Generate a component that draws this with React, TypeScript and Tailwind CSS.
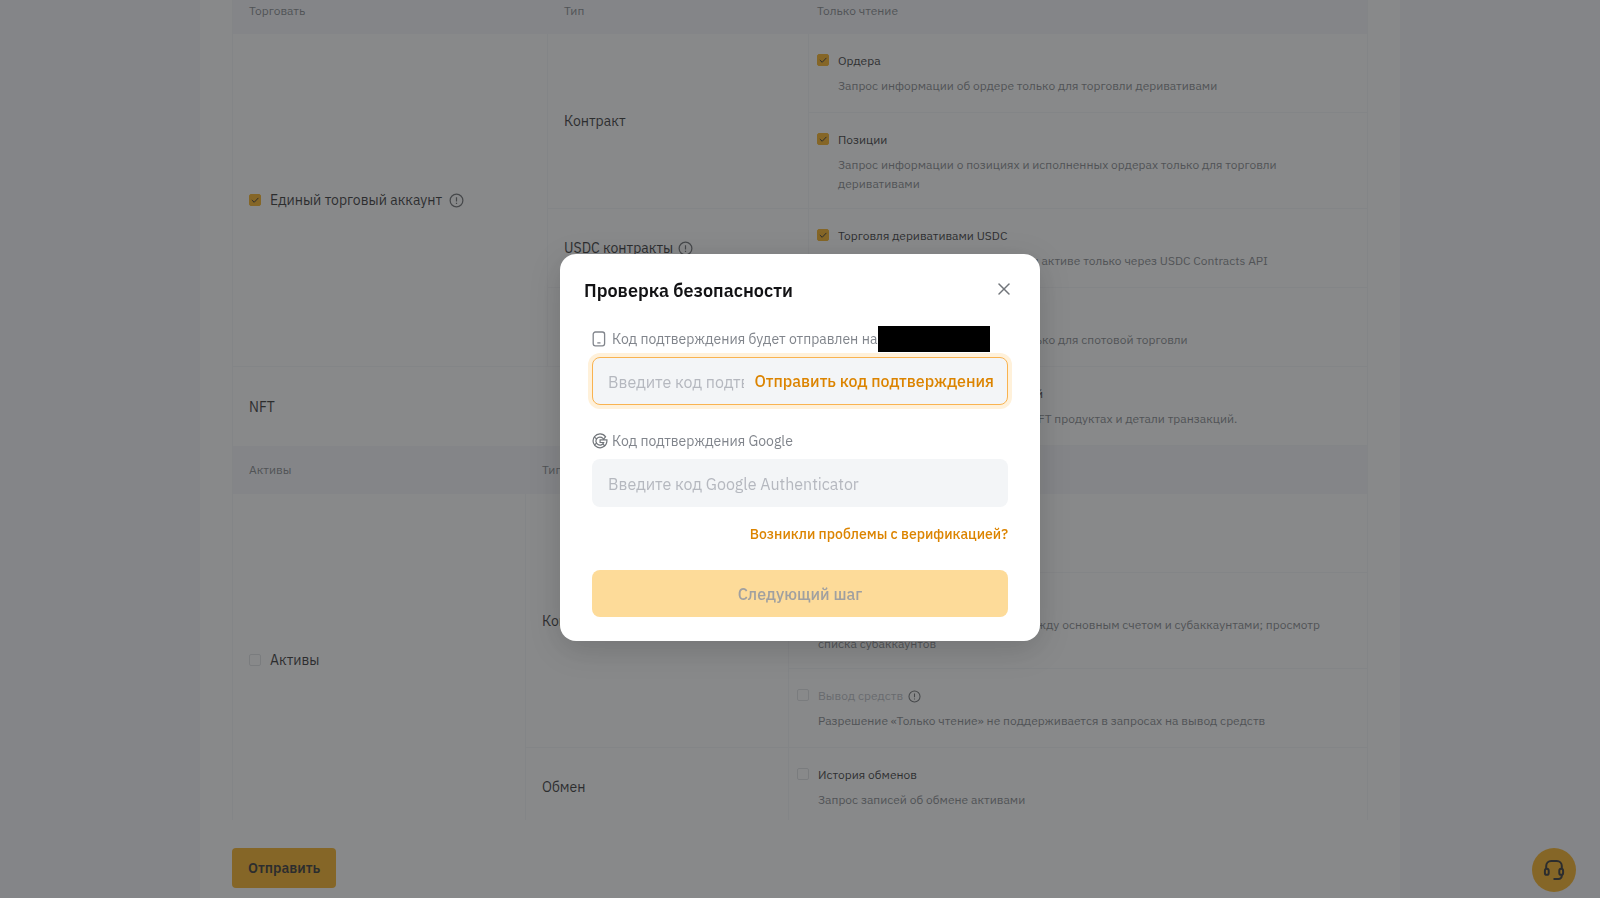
import React, { useState } from 'react';
import { FiX } from 'react-icons/fi';

interface Permission {
  label: string;
  description: string;
  checked?: boolean;
  disabled?: boolean;
}

interface PermissionType {
  name: string;
  hint?: boolean;
  items: Permission[];
}

const TRADE_TYPES: PermissionType[] = [
  {
    name: 'Контракт',
    items: [
      { label: 'Ордера', description: 'Запрос информации об ордере только для торговли деривативами', checked: true },
      { label: 'Позиции', description: 'Запрос информации о позициях и исполненных ордерах только для торговли деривативами', checked: true },
    ],
  },
  {
    name: 'USDC контракты',
    hint: true,
    items: [
      { label: 'Торговля деривативами USDC', description: 'Запросы информации об ордерах и активе только через USDC Contracts API', checked: true },
    ],
  },
  {
    name: 'Спот',
    items: [
      { label: 'Торговать', description: 'Запрос информации об ордере только для спотовой торговли', checked: true },
    ],
  },
];

const NFT_ITEM: Permission = {
  label: 'История всех ордеров и транзакций',
  description: 'Запрос информации о доступных NFT продуктах и детали транзакций.',
};

const ASSET_TYPES: PermissionType[] = [
  {
    name: 'Кошелек',
    items: [
      { label: 'Перевод между счетами', description: 'Запрос истории переводов по счету' },
      { label: 'Перевод на субаккаунт', description: 'Запрос истории переводов средств между основным счетом и субаккаунтами; просмотр списка субаккаунтов' },
      { label: 'Вывод средств', description: 'Разрешение «Только чтение» не поддерживается в запросах на вывод средств', disabled: true },
    ],
  },
  {
    name: 'Обмен',
    items: [{ label: 'История обменов', description: 'Запрос записей об обмене активами' }],
  },
];

const HintIcon = ({ className }: { className?: string }) => (
  <svg viewBox="0 0 16 16" fill="none" stroke="#55585c" strokeWidth="1.3" className={className}>
    <circle cx="8" cy="8" r="6.8" />
    <path d="M8 4.4v4.6M8 10.4v1.3" />
  </svg>
);

const PhoneIcon = () => (
  <svg viewBox="0 0 14 16" width="14" height="16" fill="none" stroke="#81858c" strokeWidth="1.3">
    <rect x="1.2" y="1" width="11.4" height="13.8" rx="2.2" />
    <path d="M5.3 11.9h3.2" />
  </svg>
);

const GoogleIcon = () => (
  <svg viewBox="0 0 16 16" width="16" height="16" fill="none" stroke="#71757a" strokeWidth="1.2">
    <path d="M13.6 3.8A6.9 6.9 0 1 0 14.9 8.2V6.9H8.1v2.6h3.6A4 4 0 1 1 10.9 5.4l.9.6z" />
    <path d="M2.4 4.1l2.4 1.9M2.4 12l2.5-2.1M12.9 13l-2.2-2.1" />
  </svg>
);

const HeadsetIcon = () => (
  <svg viewBox="0 0 24 24" width="24" height="24" fill="none" stroke="#121214" strokeWidth="2">
    <path d="M4.2 11V8a5 5 0 0 1 5-5h5.6a5 5 0 0 1 5 5v3" />
    <rect x="2.9" y="10.8" width="3.8" height="6" rx="1.9" />
    <rect x="17.3" y="10.8" width="3.8" height="6" rx="1.9" />
    <path d="M19.8 16.5v1.3a3.3 3.3 0 0 1-3.3 3.3h-5" />
  </svg>
);

const Checkbox = ({ id, checked = false, disabled = false }: { id: string; checked?: boolean; disabled?: boolean }) => {
  const [on, setOn] = useState(checked);
  return (
    <span className="grid size-3 shrink-0">
      <input
        id={id}
        type="checkbox"
        checked={on}
        disabled={disabled}
        onChange={e => setOn(e.target.checked)}
        className="peer col-start-1 row-start-1 size-3 appearance-none rounded-xs border border-[#dcdde1] checked:border-[#f7a600] checked:bg-[#f7a600]"
      />
      <svg viewBox="0 0 12 12" fill="none" stroke="#121214" className="pointer-events-none invisible col-start-1 row-start-1 size-3 peer-checked:visible">
        <path d="M2.8 6l2.4 2.3 4.2-4.4" />
      </svg>
    </span>
  );
};

const PermissionCell = ({ item }: { item: Permission }) => (
  <td className="h-[79px] border-b border-[#f3f4f6] pt-[17px] pr-8 pb-[15px] pl-2 align-top">
    <div className="flex items-center gap-[9px]">
      <div className="pb-0.5">
        <Checkbox id={item.label} checked={item.checked} disabled={item.disabled} />
      </div>
      <label htmlFor={item.label} className={`text-xs leading-5 ${item.disabled ? 'text-[#adb1b8]' : 'text-[#121214]'}`}>
        {item.label}
      </label>
      {item.disabled && <HintIcon className="-ml-1 size-[13px]" />}
    </div>
    <p className="mt-[5px] ml-[21px] text-xs leading-[19px] text-[#71757a]">{item.description}</p>
  </td>
);

const HeaderCells = ({ title, className }: { title: string; className: string }) => (
  <tr className="bg-[#f5f5fa] text-left text-xs text-[#71757a]">
    <th className={`pl-4 font-normal ${className}`}>{title}</th>
    <th className={`pl-4 font-normal ${className}`}>Тип</th>
    <th className={`pl-2 font-normal ${className}`}>Только чтение</th>
  </tr>
);

const TypeRows = ({ types, group }: { types: PermissionType[]; group: React.ReactNode }) => {
  const total = types.reduce((sum, t) => sum + t.items.length, 0);
  return (
    <>
      {types.map((type, ti) =>
        type.items.map((item, i) => (
          <tr key={item.label}>
            {ti === 0 && i === 0 && (
              <td rowSpan={total} className="border-r border-b border-[#f3f4f6] pl-4">
                {group}
              </td>
            )}
            {i === 0 && (
              <td rowSpan={type.items.length} className="border-r border-b border-[#f3f4f6] pl-4">
                <span className="flex items-center gap-[5px]">
                  {type.name}
                  {type.hint && <HintIcon className="size-[15px]" />}
                </span>
              </td>
            )}
            <PermissionCell item={item} />
          </tr>
        ))
      )}
    </>
  );
};

const SecurityModal = ({ onClose }: { onClose: () => void }) => {
  const [code, setCode] = useState('');
  const [googleCode, setGoogleCode] = useState('');

  return (
    <div className="fixed inset-0 flex items-center justify-center bg-[#3c3e40]/61 pb-[3px]">
      <div role="dialog" aria-labelledby="security-title" className="w-[480px] rounded-2xl bg-white px-6 pt-[23px] pb-6 shadow-[0_8px_32px_rgba(0,0,0,0.16)]">
        <div className="flex items-center justify-between">
          <h2 id="security-title" className="text-lg leading-7 font-semibold text-[#121214]">Проверка безопасности</h2>
          <button type="button" aria-label="Закрыть" onClick={onClose} className="mr-0.5 mb-1 text-[#71757a]">
            <FiX size={20} strokeWidth={1.8} />
          </button>
        </div>

        <form className="px-2" onSubmit={e => e.preventDefault()}>
          <div className="mt-6 flex h-5 items-center">
            <PhoneIcon />
            <label htmlFor="code" className="mr-px ml-1.5 text-sm leading-5 whitespace-nowrap text-[#81858c]">
              Код подтверждения будет отправлен на
            </label>
            <span className="h-[26px] w-28 bg-black" />
          </div>
          <div className="mt-2 flex h-12 items-center rounded-lg border border-[#f9b350] bg-[#f3f5f7] pr-[13px] pl-[15px] ring-4 ring-[#fff1da]">
            <input
              id="code"
              value={code}
              onChange={e => setCode(e.target.value)}
              placeholder="Введите код подтверждения"
              className="min-w-0 flex-1 pt-0.5 text-base outline-none placeholder:text-[#b5b8bf]"
            />
            <button type="button" className="ml-2.5 text-base font-medium whitespace-nowrap text-[#dc8400]">
              Отправить код подтверждения
            </button>
          </div>

          <div className="mt-[26px] flex h-5 items-center gap-1">
            <GoogleIcon />
            <label htmlFor="google-code" className="text-sm leading-5 text-[#81858c]">Код подтверждения Google</label>
          </div>
          <input
            id="google-code"
            value={googleCode}
            onChange={e => setGoogleCode(e.target.value)}
            placeholder="Введите код Google Authenticator"
            className="mt-2 block h-12 w-full rounded-lg bg-[#f3f5f7] px-4 pt-0.5 text-base outline-none placeholder:text-[#b5b8bf]"
          />

          <div className="mt-[17px] flex h-5 justify-end">
            <a href="#help" className="text-sm leading-5 font-medium text-[#dc8400]">Возникли проблемы с верификацией?</a>
          </div>
          <button type="submit" disabled className="mt-[26px] h-[47px] w-full rounded-lg bg-[#fddb99] text-base font-medium text-[#a0a0a0]">
            Следующий шаг
          </button>
        </form>
      </div>
    </div>
  );
};

export default function App() {
  const [open, setOpen] = useState(true);

  return (
    <div className="h-screen overflow-hidden bg-[#f5f5fa] font-['IBM_Plex_Sans','Noto_Sans',sans-serif] text-sm text-[#121214]">
      <main className="mx-auto min-h-screen max-w-[1200px] bg-white px-8">
        <table className="w-full table-fixed border-separate border-spacing-0 border-x border-[#f3f4f6]">
          <colgroup>
            <col className="w-[315px]" />
            <col className="w-[261px]" />
            <col />
          </colgroup>
          <thead>
            <HeaderCells title="Торговать" className="h-[34px] align-top leading-[22px]" />
          </thead>
          <tbody>
            <TypeRows
              types={TRADE_TYPES}
              group={
                <span className="flex items-center gap-[9px]">
                  <Checkbox id="unified" checked />
                  <label htmlFor="unified">Единый торговый аккаунт</label>
                  <HintIcon className="-ml-0.5 size-[15px]" />
                </span>
              }
            />
            <tr>
              <td colSpan={2} className="border-r border-[#f3f4f6] pl-4">NFT</td>
              <PermissionCell item={NFT_ITEM} />
            </tr>
          </tbody>
        </table>

        <div className="overflow-hidden">
          <table className="-mb-[7px] w-full table-fixed border-separate border-spacing-0 border-x border-[#f3f4f6]">
            <colgroup>
              <col className="w-[293px]" />
              <col className="w-[263px]" />
              <col />
            </colgroup>
            <thead>
              <HeaderCells title="Активы" className="h-12" />
            </thead>
            <tbody>
              <TypeRows
                types={ASSET_TYPES}
                group={
                  <span className="flex items-center gap-[9px]">
                    <Checkbox id="assets" />
                    <label htmlFor="assets">Активы</label>
                  </span>
                }
              />
            </tbody>
          </table>
        </div>

        <button type="button" onClick={() => setOpen(true)} className="mt-7 h-10 rounded-sm bg-[#f7a600] px-4 font-semibold">
          Отправить
        </button>
      </main>

      <button type="button" aria-label="Поддержка" className="fixed right-6 bottom-1.5 flex size-11 items-center justify-center rounded-full bg-[#f7a600]">
        <HeadsetIcon />
      </button>

      {open && <SecurityModal onClose={() => setOpen(false)} />}
    </div>
  );
}
